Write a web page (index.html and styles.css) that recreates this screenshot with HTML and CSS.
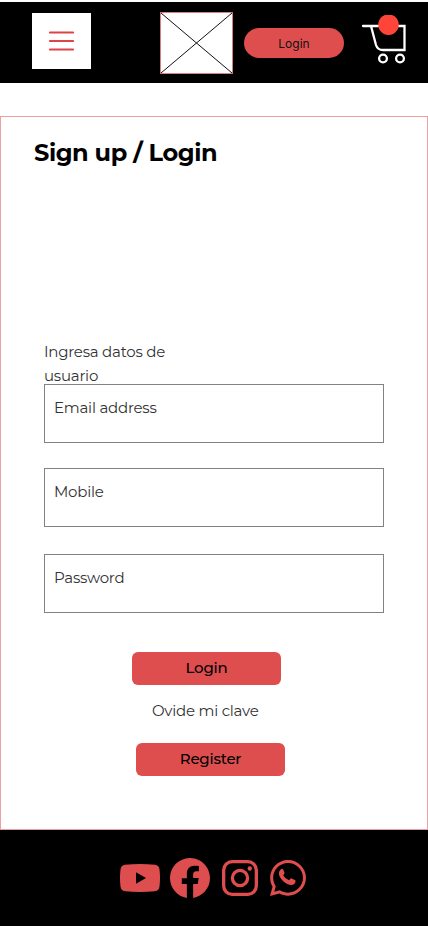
FILE: index.html
```
<!DOCTYPE html>
<html lang="es">
<head>
<meta charset="utf-8">
<meta name="viewport" content="width=device-width, initial-scale=1">
<title>Sign up / Login</title>
<link rel="stylesheet" href="styles.css">
</head>
<body>
<header class="topbar">
  <button class="menu" aria-label="Menu">
    <svg width="25" height="20" viewBox="0 0 25 20"><path d="M1 1.5h23M1 10h23M1 18.5h23" fill="none" stroke="#dd4446" stroke-width="2.2" stroke-linecap="round"/></svg>
  </button>
  <svg class="logo" width="73" height="62" viewBox="0 0 73 62"><path d="M.5.5h72v61H.5z" fill="#fff" stroke="#d98080"/><path d="M1 1l71 60M72 1L1 61" stroke="#111" stroke-width="1"/></svg>
  <a class="pill">Login</a>
  <svg class="cart" width="46" height="52" viewBox="0 0 46 52"><g fill="none" stroke="#fff" stroke-width="2.3"><path d="M2 12h41.500v24H22q-5.500 0-7-5L10 12" stroke-linecap="round"/><circle cx="22" cy="44.500" r="3.900"/><circle cx="39" cy="44.500" r="3.900"/></g><path d="M24 1h7a10.300 10.300 0 1 1-7 0z" fill="#ff453a"/></svg>
</header>
<main class="panel">
  <h1 class="title">Sign up / Login</h1>
  <form class="form">
    <p class="hint"><span class="hint-first">Ingresa datos de</span><br><span class="hint-second">usuario</span></p>
    <label class="field"><span class="email">Email address</span></label>
    <label class="field"><span class="mobile">Mobile</span></label>
    <label class="field last"><span class="password">Password</span></label>
  </form>
  <div class="actions">
    <button class="btn login">Login</button>
    <a class="forgot">Ovide mi clave</a>
    <button class="btn register">Register</button>
  </div>
</main>
<footer class="social">
  <svg width="40" height="28" viewBox="0 0 40 28"><path fill-rule="evenodd" d="M5 .8Q20-.8 35 .8 39 1.200 39.500 5.500 40.500 14 39.500 22.500 39 26.800 35 27.200 20 28.800 5 27.200 1 26.800.5 22.500-.5 14 .5 5.500 1 1.200 5 .8zM16 8.200v11.600L26 14z"/></svg>
  <svg width="40" height="40" viewBox="0 0 16 16"><path d="M16 8.049c0-4.446-3.582-8.050-8-8.050C3.580 0-.002 3.603-.002 8.050c0 4.017 2.926 7.347 6.750 7.951v-5.625h-2.030V8.050H6.750V6.275c0-2.017 1.195-3.131 3.022-3.131.876 0 1.791.157 1.791.157v1.980h-1.009c-.993 0-1.303.621-1.303 1.258v1.510h2.218l-.354 2.326H9.250V16c3.824-.604 6.750-3.934 6.750-7.951"/></svg>
  <svg class="insta" width="36" height="36" viewBox="0 0 36 36"><g fill="none" stroke="#df4e4f" stroke-width="3.300"><rect x="1.650" y="1.650" width="32.700" height="32.700" rx="8.500"/><circle cx="18" cy="18" r="7.600"/></g><circle cx="27.800" cy="8.500" r="2.200"/></svg>
  <svg width="36" height="36" viewBox="0 32 448 448"><path d="M380.900 97.100C339 55.100 283.200 32 223.900 32c-122.400 0-222 99.600-222 222 0 39.100 10.200 77.300 29.600 111L0 480l117.700-30.900c32.400 17.700 68.900 27 106.100 27h.1c122.300 0 224.100-99.600 224.100-222 0-59.300-25.200-115-67.100-157zm-157 341.600c-33.200 0-65.700-8.900-94-25.700l-6.700-4-69.800 18.300L72 359.200l-4.400-7c-18.500-29.400-28.200-63.300-28.200-98.200 0-101.700 82.800-184.500 184.600-184.500 49.300 0 95.600 19.200 130.400 54.100 34.800 34.900 56.200 81.200 56.100 130.500 0 101.800-84.900 184.600-186.600 184.600z"/><path d="M140 143q18-5 25 10l15 35q4 10-4 18l-12 15q24 44 72 64l18-21q6-7 15-3l41 20q9 4 8 14-5 44-53 47-49 0-103-50-51-48-51-95 1-36 29-54z"/></svg>
</footer>
</body>
</html>
```
FILE: styles.css
```
* { box-sizing: border-box; }
body {
  margin: 0;
  padding-top: 2px;
  width: 428px;
  height: 926px;
  background: #fff;
  color: #333;
  font-family: Montserrat, Inter, sans-serif;
  font-size: 15px;
  letter-spacing: -.23px;
}
button { border: 0; padding: 0; font-family: inherit; letter-spacing: inherit; }
.topbar {
  display: flex;
  align-items: flex-start;
  height: 81px;
  padding: 10px 21px 0 32px;
  background: #000;
}
.menu {
  display: grid;
  place-items: center;
  width: 59px;
  height: 56px;
  margin: 1px 69px 0 0;
  background: #fff;
}
.logo { margin-right: 11px; }
.pill {
  width: 100px;
  height: 30px;
  margin: 16px 17px 0 0;
  border-radius: 15px;
  background: #df4e4f;
  color: #111;
  font: 12px/31px Inter, sans-serif;
  letter-spacing: 0;
  text-align: center;
}
.cart { margin-top: 2px; }
.panel {
  height: 714px;
  margin-top: 33px;
  border: 1px solid #eda0a1;
}
.title {
  height: 36px;
  margin: 18px 0 0 33px;
  color: #000;
  font-size: 24px;
  line-height: 36px;
  font-weight: 700;
  letter-spacing: -.42px;
  white-space: nowrap;
}
.form { width: 340px; margin: 169px 0 0 43px; }
.hint { height: 44px; margin: 0; line-height: 24px; }
.field {
  display: block;
  height: 59px;
  margin-bottom: 25px;
  padding: 11px 9px;
  border: 1px solid #828282;
  line-height: 24px;
}
.field.last { margin-top: 27px; margin-bottom: 39px; }
.actions { display: flex; flex-direction: column; align-items: flex-start; }
.btn {
  width: 149px;
  height: 33px;
  padding-bottom: 2px;
  border-radius: 6px;
  background: #df4e4f;
  color: #000;
  font-size: 15px;
  font-weight: 500;
  line-height: 31px;
}
.login { margin-left: 131px; }
.forgot { height: 24px; margin: 14px 0 20px 151px; line-height: 24px; }
.register { margin-left: 135px; }
.social {
  display: flex;
  align-items: center;
  gap: 10px;
  height: 96px;
  padding-left: 120px;
  background: #000;
  fill: #df4e4f;
}
.insta { margin: 0 2px; }
```
